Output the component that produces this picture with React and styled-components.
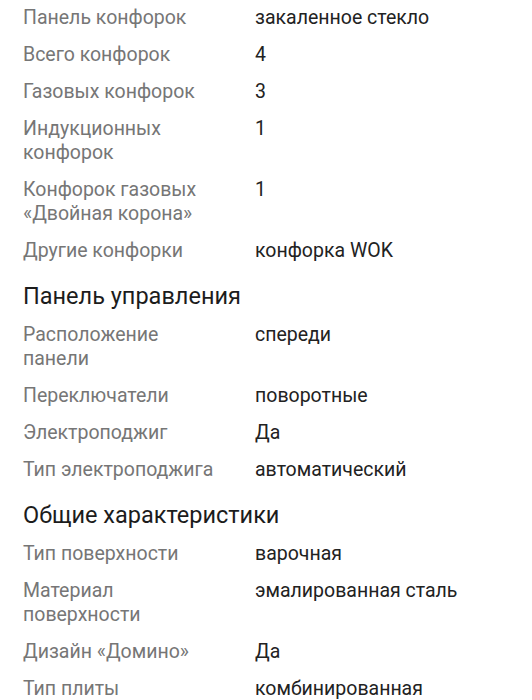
import React from 'react';
import styled, { createGlobalStyle } from 'styled-components';

const GlobalStyle = createGlobalStyle`
	body {
		margin: 0;
		background: #ffffff;
		font-family: Roboto, 'Noto Sans', sans-serif;
	}
`;

const sections = [
	{
		title: null,
		rows: [
			['Панель конфорок', 'закаленное стекло'],
			['Всего конфорок', '4'],
			['Газовых конфорок', '3'],
			['Индукционных конфорок', '1'],
			['Конфорок газовых «Двойная корона»', '1'],
			['Другие конфорки', 'конфорка WOK'],
		],
	},
	{
		title: 'Панель управления',
		rows: [
			['Расположение панели', 'спереди'],
			['Переключатели', 'поворотные'],
			['Электроподжиг', 'Да'],
			['Тип электроподжига', 'автоматический'],
		],
	},
	{
		title: 'Общие характеристики',
		rows: [
			['Тип поверхности', 'варочная'],
			['Материал поверхности', 'эмалированная сталь'],
			['Дизайн «Домино»', 'Да'],
			['Тип плиты', 'комбинированная'],
		],
	},
];

export default function App() {
	return (
		<>
			<GlobalStyle />
			<Page>
				{sections.map((section, i) => (
					<Section key={i}>
						{section.title && <Heading>{section.title}</Heading>}
						{section.rows.map(([label, value]) => (
							<Row key={label}>
								<Label>{label}</Label>
								<Value>{value}</Value>
							</Row>
						))}
					</Section>
				))}
			</Page>
		</>
	);
}

const Page = styled.div`
	padding: 0 23px;
`;
const Section = styled.section`
	display: flex;
	flex-direction: column;
`;
const Heading = styled.h2`
	margin: 0;
	padding: 12px 0 7px;
	font-size: 23.5px;
	font-weight: 400;
	line-height: 28px;
	color: #1c1c1c;
`;
const Row = styled.div`
	display: grid;
	grid-template-columns: 198px 1fr;
	column-gap: 34px;
	padding: 6px 0 7px;
	font-size: 19.5px;
	line-height: 24px;
`;
const Label = styled.div`
	color: #767676;
`;
const Value = styled.div`
	color: #222222;
`;
